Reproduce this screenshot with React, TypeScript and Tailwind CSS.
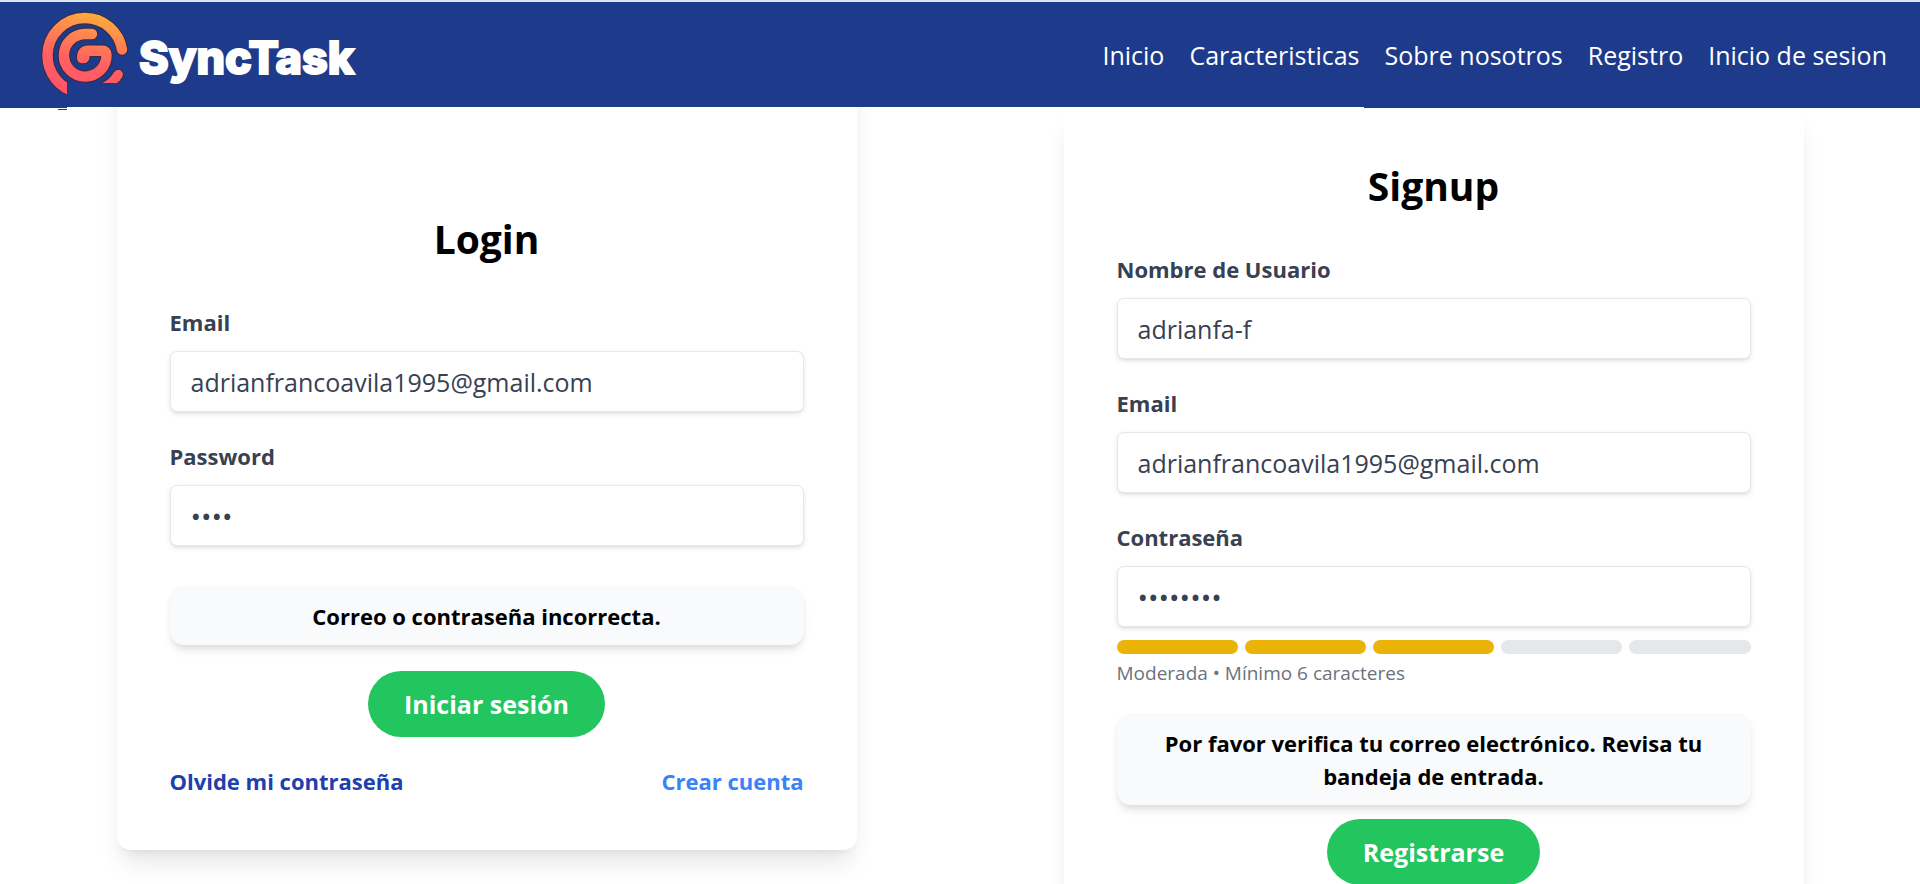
import { useId } from "react";
import type { ReactNode } from "react";

const NAV = ["Inicio", "Caracteristicas", "Sobre nosotros", "Registro", "Inicio de sesion"];

const OUTER = "M86 43.5 A37.5 37.5 0 0 0 49 12 A37.5 37.5 0 0 0 11.5 49.5 A37.5 37.5 0 0 0 40 86";
const INNER = "M56 28 H49.5 A21.3 21.3 0 1 0 70.5 49 Q70.5 44.8 66 44.8 H52 Q46 45.2 46.3 51";
const HOOK = "M41 50 H53.500 V51 Q53 57.300 47 57.300 H45.500 Q41 57 41 52 Z";
const TAIL = "M66.5 77 Q74 73 77.5 67 Q80 63 84 64 Q89 67 85.5 72 Q83.5 75.5 81 77 Z";

function LogoMark() {
  return (
    <svg viewBox="5 5 88 86" className="h-[86px] w-[88px] overflow-visible" fill="none" aria-hidden="true">
      <defs>
        <linearGradient id="flame" gradientUnits="userSpaceOnUse" x1="62" y1="6" x2="42" y2="90">
          <stop offset="0" stopColor="#fbb03b" />
          <stop offset="0.36" stopColor="#ff7c55" />
          <stop offset="0.6" stopColor="#ff6062" />
          <stop offset="1" stopColor="#ff5468" />
        </linearGradient>
        <clipPath id="ring">
          <path d="M0 0 H100 V77 H31 V106 H0 Z" />
        </clipPath>
      </defs>
      <g clipPath="url(#ring)" strokeLinecap="round" strokeLinejoin="round">
        <g stroke="#3a2a3c" strokeWidth="12.4">
          <path d={OUTER} />
          <path d={INNER} />
          <path d={HOOK} strokeWidth="2" />
          <path d={TAIL} strokeWidth="2" />
        </g>
        <g stroke="url(#flame)" strokeWidth="10.4">
          <path d={OUTER} />
          <path d={INNER} />
        </g>
        <path d={HOOK} fill="url(#flame)" />
        <path d={TAIL} fill="url(#flame)" />
      </g>
    </svg>
  );
}

function Header() {
  return (
    <header className="relative z-10">
      <div className="h-[2px] bg-[#dbe5ee]" />
      <div className="flex h-[106px] items-center justify-between bg-[#1e3a8a] pr-[33px] pl-[41px]">
        <a href="#inicio" className="flex items-center gap-[10px] pb-[2px] font-['Inter'] text-[45px] leading-none font-extrabold text-white">
          <LogoMark />
          <span className="pt-[6px] [-webkit-text-stroke:2px_white]">SyncTask</span>
        </a>
        <nav className="flex gap-[25px] pt-[2px] text-[25px] text-white">
          {NAV.map((item) => (
            <a key={item} href="#nav">{item}</a>
          ))}
        </nav>
      </div>
      <span className="absolute right-[556px] bottom-0 left-[67px] h-px bg-white" />
      <span className="absolute top-[109px] left-[58px] h-px w-[9px] bg-[#1e3a8a]" />
    </header>
  );
}

function Card({ title, className, children }: { title: string; className: string; children: ReactNode }) {
  return (
    <section
      className={`w-full max-w-[740px] self-start rounded-[14px] bg-white px-[53px] shadow-[0_17px_25px_-5px_rgb(0_0_0/0.1),0_7px_10px_-7px_rgb(0_0_0/0.1)] ${className}`}
    >
      <h2 className="mb-10 text-center text-[39px] leading-[52px] font-bold text-black">{title}</h2>
      {children}
    </section>
  );
}

function Field({ label, type, value }: { label: string; type: string; value: string }) {
  const id = useId();
  return (
    <div>
      <label htmlFor={id} className="mb-3 block text-[22px] leading-[34px] font-bold text-[#374151]">{label}</label>
      <input
        id={id}
        type={type}
        defaultValue={value}
        className={`block h-[61px] w-full rounded-[7px] border border-[#e5e7eb] bg-white px-5 text-[#374151] shadow-[0_2px_5px_0_rgb(0_0_0/0.1),0_2px_3px_-2px_rgb(0_0_0/0.1)] outline-none ${type === "password" ? "text-[28px]" : "text-[25px]"}`}
      />
    </div>
  );
}

function Alert({ children }: { children: ReactNode }) {
  return (
    <p
      role="alert"
      className="rounded-[14px] bg-[#f9fafb] px-10 pt-[14px] pb-3 text-center text-[22px] leading-[33px] font-bold text-black shadow-[0_7px_10px_-2px_rgb(0_0_0/0.1),0_3px_7px_-3px_rgb(0_0_0/0.1)]"
    >
      {children}
    </p>
  );
}

function Submit({ children }: { children: ReactNode }) {
  return (
    <button type="submit" className="mx-auto block h-[66px] rounded-full bg-[#22c55e] px-9 pt-[2px] text-[25px] font-bold text-white">
      {children}
    </button>
  );
}

export default function App() {
  return (
    <div className="flex h-screen flex-col overflow-hidden bg-white font-['Open_Sans','Noto_Sans',sans-serif]">
      <Header />
      <main className="grid min-h-0 flex-1 grid-cols-2 justify-items-center px-[13px]">
        <Card title="Login" className="-mt-14 pt-[161px] pb-[52px]">
          <form className="flex flex-col gap-[27px]">
            <Field label="Email" type="email" value="adrianfrancoavila1995@gmail.com" />
            <Field label="Password" type="password" value="1234" />
            <div className="mt-[13px] flex flex-col gap-[26px]">
              <Alert>Correo o contraseña incorrecta.</Alert>
              <Submit>Iniciar sesión</Submit>
            </div>
            <div className="flex justify-between text-[22px] leading-[34px] font-bold">
              <a href="#recuperar" className="text-[#1e40af]">Olvide mi contraseña</a>
              <a href="#signup" className="text-[#3b82f6]">Crear cuenta</a>
            </div>
          </form>
        </Card>
        <Card title="Signup" className="pt-[52px] pb-[53px]">
          <form className="flex flex-col gap-[27px]">
            <Field label="Nombre de Usuario" type="text" value="adrianfa-f" />
            <Field label="Email" type="email" value="adrianfrancoavila1995@gmail.com" />
            <div>
              <Field label="Contraseña" type="password" value="12345678" />
              <div className="mt-[13px] flex gap-[7px]">
                <span className="h-[14px] flex-1 rounded-full bg-[#eab308]" />
                <span className="h-[14px] flex-1 rounded-full bg-[#eab308]" />
                <span className="h-[14px] flex-1 rounded-full bg-[#eab308]" />
                <span className="h-[14px] flex-1 rounded-full bg-[#e5e7eb]" />
                <span className="h-[14px] flex-1 rounded-full bg-[#e5e7eb]" />
              </div>
              <p className="mt-[6px] text-[19px] leading-[26px] text-[#6b7280]">Moderada • Mínimo 6 caracteres</p>
            </div>
            <div className="flex flex-col gap-[14px]">
              <Alert>Por favor verifica tu correo electrónico. Revisa tu bandeja de entrada.</Alert>
              <Submit>Registrarse</Submit>
            </div>
          </form>
        </Card>
      </main>
    </div>
  );
}
